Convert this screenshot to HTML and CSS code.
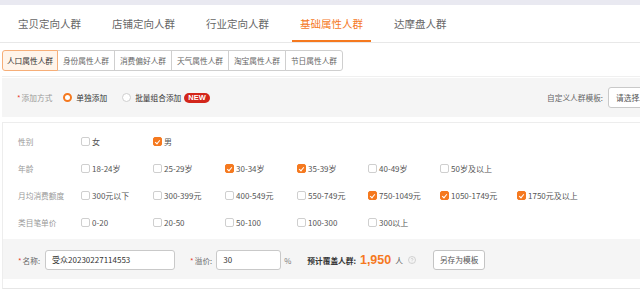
FILE: index.html
```html
<!DOCTYPE html>
<html lang="zh-CN">
<head>
	<meta charset="utf-8">
	<title>基础属性人群</title>
	<link rel="stylesheet" href="styles.css">
</head>
<body>
	<div class="topbar"></div>

	<div class="tabs">
		<div class="tab">宝贝定向人群</div>
		<div class="tab">店铺定向人群</div>
		<div class="tab">行业定向人群</div>
		<div class="tab active">基础属性人群</div>
		<div class="tab">达摩盘人群</div>
	</div>

	<div class="content">
		<div class="subtabs-wrap">
			<div class="subtabs">
				<div class="subtab active">人口属性人群</div>
				<div class="subtab">身份属性人群</div>
				<div class="subtab">消费偏好人群</div>
				<div class="subtab">天气属性人群</div>
				<div class="subtab">淘宝属性人群</div>
				<div class="subtab">节日属性人群</div>
			</div>
		</div>

		<div class="mode">
			<span class="mode-label"><i class="req">*</i>添加方式</span>
			<span class="radio checked"></span><span class="radio-text">单独添加</span>
			<span class="radio"></span><span class="radio-text last">批量组合添加</span>
			<span class="badge">NEW</span>
			<span class="tpl">
				<span class="tpl-label">自定义人群模板:</span>
				<span class="select">请选择人群模板</span>
			</span>
		</div>

		<div class="box">
			<div class="row">
				<span class="row-label">性别</span>
				<span class="opt"><i class="cb"></i>女</span>
				<span class="opt"><i class="cb on"></i>男</span>
			</div>
			<div class="row">
				<span class="row-label">年龄</span>
				<span class="opt"><i class="cb"></i>18-24岁</span>
				<span class="opt"><i class="cb"></i>25-29岁</span>
				<span class="opt"><i class="cb on"></i>30-34岁</span>
				<span class="opt"><i class="cb on"></i>35-39岁</span>
				<span class="opt"><i class="cb"></i>40-49岁</span>
				<span class="opt"><i class="cb"></i>50岁及以上</span>
			</div>
			<div class="row">
				<span class="row-label">月均消费额度</span>
				<span class="opt"><i class="cb"></i>300元以下</span>
				<span class="opt"><i class="cb"></i>300-399元</span>
				<span class="opt"><i class="cb"></i>400-549元</span>
				<span class="opt"><i class="cb"></i>550-749元</span>
				<span class="opt"><i class="cb on"></i>750-1049元</span>
				<span class="opt"><i class="cb on"></i>1050-1749元</span>
				<span class="opt"><i class="cb on"></i>1750元及以上</span>
			</div>
			<div class="row">
				<span class="row-label">类目笔单价</span>
				<span class="opt"><i class="cb"></i>0-20</span>
				<span class="opt"><i class="cb"></i>20-50</span>
				<span class="opt"><i class="cb"></i>50-100</span>
				<span class="opt"><i class="cb"></i>100-300</span>
				<span class="opt"><i class="cb"></i>300以上</span>
			</div>

			<div class="footer">
				<span class="f-label"><i class="req">*</i>名称:</span>
				<span class="input name">受众20230227114553</span>
				<span class="f-label premium"><i class="req">*</i>溢价:</span>
				<span class="input pct">30</span>
				<span class="unit">%</span>
				<span class="cover">预计覆盖人群:</span>
				<span class="count">1,950</span>
				<span class="people">人</span>
				<svg class="help" width="8" height="8" viewBox="0 0 8 8">
					<circle cx="4" cy="4" r="3.5" fill="none" stroke="#c8c8c8" stroke-width="0.8"/>
					<path d="M2.9 3.1 C2.9 2.3 5.1 2.3 5.1 3.2 C5.1 3.9 4 3.9 4 4.7" fill="none" stroke="#c8c8c8" stroke-width="0.8"/>
					<circle cx="4" cy="5.9" r="0.45" fill="#c8c8c8"/>
				</svg>
				<span class="btn">另存为模板</span>
			</div>
		</div>
	</div>
</body>
</html>
```

FILE: styles.css
```css
html, body {
	margin: 0;
	padding: 0;
	width: 640px;
	height: 292px;
	overflow: hidden;
	background: #ffffff;
	font-family: "Noto Sans CJK SC", "Noto Sans", sans-serif;
	color: #333;
}

.topbar {
	height: 5px;
	background: #e9e9f1;
}

/* top tabs */
.tabs {
	display: flex;
	padding-left: 10px;
	border-bottom: 1px solid #e8e8e8;
}

.tab {
	box-sizing: border-box;
	height: 37px;
	padding: 3px 8px 0;
	margin-right: 15px;
	border-bottom: 2px solid transparent;
	font-size: 10.5px;
	line-height: 32px;
	color: #666;
	white-space: nowrap;
}

.tab.active {
	color: #f5791f;
	border-bottom-color: #f5791f;
}

.content {
	padding-left: 2px;
}

/* sub tabs */
.subtabs-wrap {
	padding: 7px 0 5px;
	border-bottom: 1px solid #f0f0f0;
}

.subtabs {
	display: flex;
}

.subtab {
	box-sizing: border-box;
	width: 58px;
	height: 21px;
	border: 1px solid #cfcfcf;
	margin-left: -1px;
	font-size: 7.7px;
	line-height: 19px;
	text-align: center;
	color: #666;
	background: #fff;
	white-space: nowrap;
}

.subtab:first-child {
	width: 56px;
	margin-left: 0;
	border-radius: 3px 0 0 3px;
}

.subtab:last-child {
	border-radius: 0 3px 3px 0;
}

.subtab.active {
	position: relative;
	border-color: #f6ae78;
	background: #fff4ea;
	color: #333;
}

/* add mode bar */
.mode {
	display: flex;
	align-items: center;
	margin-top: 1px;
	height: 39px;
	padding-left: 15px;
	background: #f5f5f5;
	font-size: 7.7px;
	white-space: nowrap;
}

.req {
	font-style: normal;
	color: #e8392b;
	margin-right: 1px;
}

.mode-label {
	color: #999;
	margin-right: 11px;
}

.radio {
	box-sizing: border-box;
	width: 9px;
	height: 9px;
	border: 1px solid #cfcfcf;
	border-radius: 50%;
	background: #fff;
	margin-right: 4px;
}

.radio.checked {
	border: 2.5px solid #f5791f;
}

.radio-text {
	color: #333;
	margin-right: 15px;
}

.radio-text.last {
	margin-right: 3px;
}

.badge {
	background: #d3261b;
	color: #fff;
	font-family: "Liberation Sans", Arial, sans-serif;
	font-weight: bold;
	font-size: 7.5px;
	line-height: 10px;
	padding: 0 4px;
	border-radius: 5px;
}

.tpl {
	display: flex;
	align-items: center;
	margin-left: auto;
}

.tpl-label {
	color: #666;
	margin-right: 5px;
}

.select {
	box-sizing: border-box;
	width: 90px;
	height: 21px;
	line-height: 19px;
	padding-left: 7px;
	border: 1px solid #c9c9c9;
	border-radius: 3px;
	background: #fff;
	color: #555;
	margin-right: -58px;
}

/* option box */
.box {
	margin-top: 5px;
	border-top: 1px solid #ededed;
	border-left: 1px solid #ededed;
	border-bottom: 1px solid #e6e6e6;
	padding: 5px 0 9px;
}

.row {
	display: grid;
	grid-template-columns: 63px 72px 72px 72px 71px 72px 77px auto;
	align-items: center;
	height: 27px;
	padding-left: 15px;
	font-size: 8px;
	white-space: nowrap;
}

.row-label {
	color: #999;
	font-size: 7.7px;
}

.opt {
	display: flex;
	align-items: center;
	color: #555;
}

.cb {
	box-sizing: border-box;
	width: 9px;
	height: 9px;
	border: 1px solid #cfcfcf;
	border-radius: 2px;
	background: #fff;
	margin-right: 2px;
	position: relative;
}

.cb.on {
	background: #f5791f;
	border-color: #f5791f;
}

.cb.on::after {
	content: "";
	position: absolute;
	left: 2px;
	top: 0.5px;
	width: 2px;
	height: 4px;
	border: solid #fff;
	border-width: 0 1.2px 1.2px 0;
	transform: rotate(40deg);
}

/* footer */
.footer {
	display: flex;
	align-items: center;
	margin-top: 3px;
	height: 40px;
	padding: 2px 0 0 15px;
	box-sizing: border-box;
	background: #f5f5f5;
	font-size: 7.7px;
	white-space: nowrap;
}

.f-label {
	color: #666;
	margin-right: 5px;
}

.f-label.premium {
	margin-left: 15px;
	margin-right: 4px;
}

.input {
	box-sizing: border-box;
	height: 20px;
	line-height: 18px;
	padding-left: 6px;
	border: 1px solid #c9c9c9;
	border-radius: 3px;
	background: #fff;
	color: #333;
	font-size: 8px;
}

.input.name {
	width: 130px;
}

.input.pct {
	width: 65px;
}

.unit {
	color: #777;
	margin-left: 3px;
}

.cover {
	margin-left: 16px;
	font-weight: bold;
	color: #333;
}

.count {
	margin-left: 4px;
	font-family: "Liberation Sans", Arial, sans-serif;
	font-weight: bold;
	font-size: 12.5px;
	color: #f5791f;
}

.people {
	margin-left: 4px;
	color: #555;
}

.help {
	margin-left: 5px;
}

.btn {
	box-sizing: border-box;
	margin-left: 17px;
	height: 20px;
	line-height: 18px;
	padding: 0 6px;
	border: 1px solid #c4c4c4;
	border-radius: 3px;
	background: #fff;
	color: #555;
}
```
